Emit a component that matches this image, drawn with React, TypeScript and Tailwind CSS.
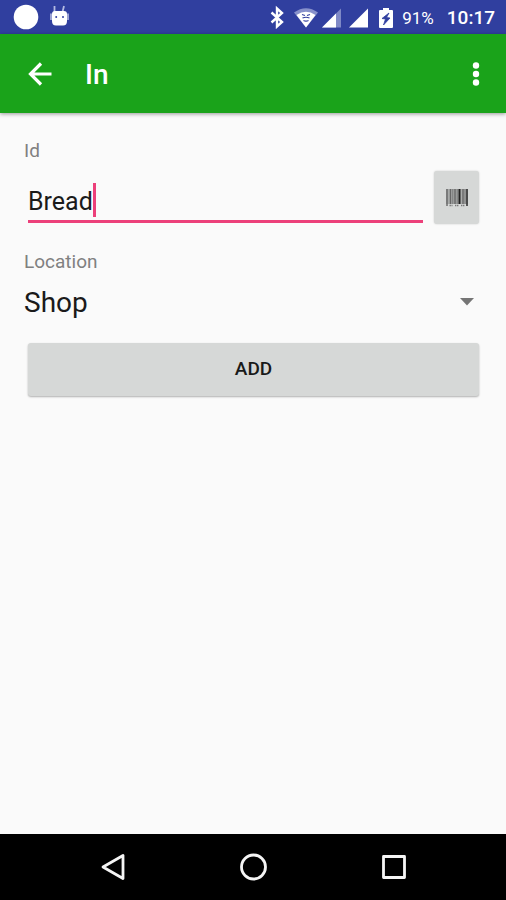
import * as React from "react"
import { useState } from "react"

const locations = ["Shop", "Warehouse", "Storage"]

function StatusBar() {
  return (
    <div className="flex h-[34px] shrink-0 items-center bg-[#303f9f] pr-[11px] pl-[13px] text-white">
      <svg className="size-[26px]" viewBox="0 0 26 26" fill="currentColor" aria-hidden="true">
        <circle cx="13" cy="13" r="12.3" />
      </svg>
      <svg className="ml-[10px] h-6 w-5" viewBox="0 0 20 24" aria-hidden="true">
        <path d="M5.500 1v6M15 1l-1.500 6" stroke="#b4bbe2" strokeWidth="1.800" />
        <path d="M6 6H15Q18 6 18 9V16Q18 20.500 14 20.500H7Q3 20.500 3 16V9Q3 6 6 6Z" fill="#fff" />
        <path d="M2 8.500V15M19 8.500V15" stroke="#c5cbea" strokeWidth="1.400" />
        <circle cx="7.200" cy="12" r="1" fill="#303f9f" />
        <circle cx="14" cy="12" r="1" fill="#303f9f" />
      </svg>
      <div className="ml-auto flex items-center">
        <svg className="h-6 w-4" viewBox="0 0 16 24" fill="none" stroke="currentColor" strokeWidth="2.400" aria-hidden="true">
          <path d="M2.500 7.500L13 17L8 21.500V3.500L13 8L2.500 17.500" />
        </svg>
        <svg className="ml-2 h-6 w-[26px]" viewBox="0 0 26 24" aria-hidden="true">
          <path d="M1 7.500Q13 -1 25 7.500L13 22.500Z" fill="#8791cb" />
          <path d="M3.500 10Q13 3.500 22.500 10L13 22.500Z" fill="#fff" />
          <path d="M9 9.500l3 1M17 9.500l-3 1M9.500 13q3.500-1.500 7 0M10.500 15.500q2.500 1.200 5 0" stroke="#303f9f" strokeWidth="1.200" fill="none" />
        </svg>
        <svg className="ml-[2px] h-6 w-[21px]" viewBox="0 0 21 24" aria-hidden="true">
          <path d="M1 22.500L20 3.500V22.500Z" fill="#7f89c6" />
          <path d="M1 22.500L15 8.500V22.500Z" fill="#fff" />
        </svg>
        <svg className="ml-[6px] h-6 w-[21px]" viewBox="0 0 21 24" aria-hidden="true">
          <path d="M1 22.500L20 3.500V22.500Z" fill="#fff" />
        </svg>
        <svg className="ml-[9px] h-6 w-4" viewBox="0 0 16 24" aria-hidden="true">
          <path d="M5 3H11V5H14Q15 5 15 6V22Q15 23 14 23H2Q1 23 1 22V6Q1 5 2 5H5Z" fill="#fff" />
          <path d="M11 8L4 13.500L7.500 14L5.500 20L12 13L8.500 12.500Z" fill="#303f9f" stroke="#303f9f" strokeWidth=".8" />
        </svg>
        <span className="ml-2 pt-[3px] text-[17px]">91%</span>
        <span className="ml-[13px] pt-[3px] text-[19px] font-medium">10:17</span>
      </div>
    </div>
  )
}

function Toolbar() {
  return (
    <header className="z-10 flex h-[79px] shrink-0 items-center bg-[#1aa31a] px-[21px] text-white shadow-[0_1px_4px_rgba(0,0,0,0.4)]">
      <button type="button" aria-label="Back" className="cursor-pointer">
        <svg className="size-[38px]" viewBox="0 0 38 38" fill="none" stroke="currentColor" strokeWidth="3.200">
          <path d="M30.500 19H10M20 8.500L9.500 19L20 29.500" />
        </svg>
      </button>
      <h1 className="ml-[26px] pt-[2px] text-[28px] font-medium">In</h1>
      <button type="button" aria-label="More options" className="ml-auto cursor-pointer">
        <svg className="h-8 w-[18px]" viewBox="0 0 18 32" fill="currentColor">
          <circle cx="9" cy="7.500" r="3.200" />
          <circle cx="9" cy="16" r="3.200" />
          <circle cx="9" cy="24.500" r="3.200" />
        </svg>
      </button>
    </header>
  )
}

function BarcodeIcon() {
  return (
    <svg className="h-[18px] w-[22px]" viewBox="0 0 22 18" aria-hidden="true">
      <path d="M0 0H22V15H0Z" fill="#a9abaa" />
      <path d="M1 0v17M4.500 0v15M9 0v15M17 0v15" stroke="#666" strokeWidth="1.400" />
      <path d="M6.800 0v15M11.200 0v15M19 0v15" stroke="#777" strokeWidth="1" />
      <path d="M13.500 0v15" stroke="#222" strokeWidth="2" />
      <path d="M21 0v17" stroke="#333" strokeWidth="1.600" />
      <path d="M3.500 16.500h3M9 16.500h4M15 16.500h3.500" stroke="#777" strokeWidth="1.400" strokeDasharray="1.400 .6" />
    </svg>
  )
}

function NavigationBar() {
  return (
    <nav className="flex h-[66px] shrink-0 items-center justify-center gap-[108px] bg-black text-[#f5f5f5]">
      <button type="button" aria-label="Back" className="cursor-pointer">
        <svg className="size-8" viewBox="0 0 32 32" fill="none" stroke="currentColor" strokeWidth="2.800" strokeLinejoin="round">
          <path d="M26 4.500V27.500L6 16Z" />
        </svg>
      </button>
      <button type="button" aria-label="Home" className="cursor-pointer">
        <svg className="size-8" viewBox="0 0 32 32" fill="none" stroke="currentColor" strokeWidth="2.800">
          <circle cx="16.500" cy="16" r="12" />
        </svg>
      </button>
      <button type="button" aria-label="Recent apps" className="cursor-pointer">
        <svg className="size-8" viewBox="0 0 32 32" fill="none" stroke="currentColor" strokeWidth="2.800" strokeLinejoin="round">
          <path d="M6.500 5.500H27.500V26.500H6.500Z" />
        </svg>
      </button>
    </nav>
  )
}

export default function App() {
  const [id, setId] = useState("Bread")
  const [location, setLocation] = useState("Shop")

  const handleSubmit = (e: React.FormEvent) => {
    e.preventDefault()
  }

  return (
    <div className="flex min-h-screen flex-col bg-[#fafafa] font-['Roboto',sans-serif] text-[#1a1a1a]">
      <StatusBar />
      <Toolbar />
      <form onSubmit={handleSubmit} className="flex flex-1 flex-col px-6 pt-[26px]">
        <label htmlFor="item-id" className="text-[19px] leading-6 text-[#808080]">
          Id
        </label>
        <div className="mt-2 flex items-start gap-[11px] pr-[3px] pl-1">
          <div className="flex h-[52px] flex-1 items-center border-b-3 border-[#ec407a] pt-3">
            <input
              id="item-id"
              type="text"
              value={id}
              onChange={(e) => setId(e.target.value)}
              className="field-sizing-content min-w-0 text-[25px] caret-transparent outline-none"
            />
            <span className="mb-1 h-[34px] w-[3px] bg-[#ec407a]" />
          </div>
          <button
            type="button"
            aria-label="Scan barcode"
            className="flex h-[53px] w-[45px] cursor-pointer items-center justify-center rounded-[3px] bg-[#d6d8d7] shadow-[0_0_2px_rgba(0,0,0,0.2)]"
          >
            <BarcodeIcon />
          </button>
        </div>

        <label htmlFor="location" className="mt-[26px] text-[19px] leading-6 text-[#808080]">
          Location
        </label>
        <div className="relative">
          <select
            id="location"
            value={location}
            onChange={(e) => setLocation(e.target.value)}
            className="h-[58px] w-full cursor-pointer appearance-none text-[28px] outline-none"
          >
            {locations.map((name) => (
              <option key={name}>{name}</option>
            ))}
          </select>
          <svg className="pointer-events-none absolute top-6 right-2 h-2 w-[14px]" viewBox="0 0 14 8" fill="#757575" aria-hidden="true">
            <path d="M0 0H14L7 7.500Z" />
          </svg>
        </div>

        <button
          type="submit"
          className="mt-[11px] mr-[3px] ml-1 h-[53px] cursor-pointer rounded-[3px] bg-[#d6d8d7] text-[19px] font-medium shadow-[0_1px_2px_rgba(0,0,0,0.3)]"
        >
          ADD
        </button>
      </form>
      <NavigationBar />
    </div>
  )
}
